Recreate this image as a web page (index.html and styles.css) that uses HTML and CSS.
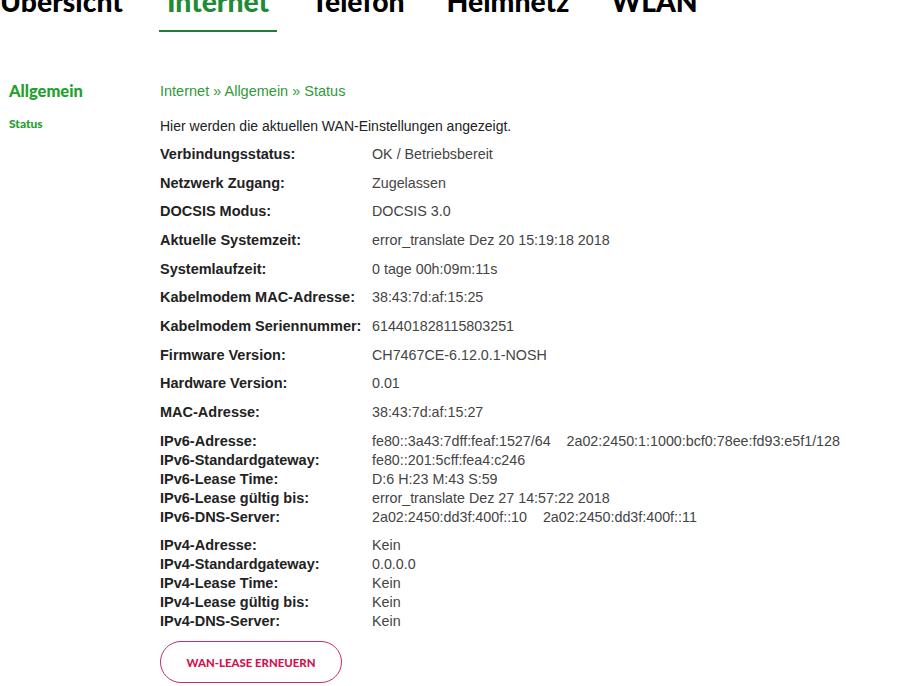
FILE: index.html
```html
<!DOCTYPE html>
<html lang="de">
<head>
<meta charset="utf-8">
<title>Internet Status</title>
<link rel="stylesheet" href="styles.css">
</head>
<body>
<nav class="topnav">
  <a class="nav-item">Übersicht</a>
  <a class="nav-item active">Internet</a>
  <a class="nav-item">Telefon</a>
  <a class="nav-item">Heimnetz</a>
  <a class="nav-item">WLAN</a>
</nav>
<div class="page">
  <aside class="sidebar">
    <div class="side-title">Allgemein</div>
    <div class="side-link">Status</div>
  </aside>
  <main class="content">
    <div class="breadcrumb">Internet » Allgemein » Status</div>
    <p class="intro">Hier werden die aktuellen WAN-Einstellungen angezeigt.</p>
    <div class="info">
      <div class="group"><div class="row"><span class="lbl">Verbindungsstatus:</span><span class="val">OK / Betriebsbereit</span></div></div>
      <div class="group"><div class="row"><span class="lbl">Netzwerk Zugang:</span><span class="val">Zugelassen</span></div></div>
      <div class="group"><div class="row"><span class="lbl">DOCSIS Modus:</span><span class="val">DOCSIS 3.0</span></div></div>
      <div class="group"><div class="row"><span class="lbl">Aktuelle Systemzeit:</span><span class="val">error_translate Dez 20 15:19:18 2018</span></div></div>
      <div class="group"><div class="row"><span class="lbl">Systemlaufzeit:</span><span class="val">0 tage 00h:09m:11s</span></div></div>
      <div class="group"><div class="row"><span class="lbl">Kabelmodem MAC-Adresse:</span><span class="val">38:43:7d:af:15:25</span></div></div>
      <div class="group"><div class="row"><span class="lbl">Kabelmodem Seriennummer:</span><span class="val">614401828115803251</span></div></div>
      <div class="group"><div class="row"><span class="lbl">Firmware Version:</span><span class="val">CH7467CE-6.12.0.1-NOSH</span></div></div>
      <div class="group"><div class="row"><span class="lbl">Hardware Version:</span><span class="val">0.01</span></div></div>
      <div class="group"><div class="row"><span class="lbl">MAC-Adresse:</span><span class="val">38:43:7d:af:15:27</span></div></div>
      <div class="group">
        <div class="row"><span class="lbl">IPv6-Adresse:</span><span class="val">fe80::3a43:7dff:feaf:1527/64&nbsp;&nbsp;&nbsp; 2a02:2450:1:1000:bcf0:78ee:fd93:e5f1/128</span></div>
        <div class="row"><span class="lbl">IPv6-Standardgateway:</span><span class="val">fe80::201:5cff:fea4:c246</span></div>
        <div class="row"><span class="lbl">IPv6-Lease Time:</span><span class="val">D:6 H:23 M:43 S:59</span></div>
        <div class="row"><span class="lbl">IPv6-Lease gültig bis:</span><span class="val">error_translate Dez 27 14:57:22 2018</span></div>
        <div class="row"><span class="lbl">IPv6-DNS-Server:</span><span class="val">2a02:2450:dd3f:400f::10&nbsp;&nbsp;&nbsp; 2a02:2450:dd3f:400f::11</span></div>
      </div>
      <div class="group">
        <div class="row"><span class="lbl">IPv4-Adresse:</span><span class="val">Kein</span></div>
        <div class="row"><span class="lbl">IPv4-Standardgateway:</span><span class="val">0.0.0.0</span></div>
        <div class="row"><span class="lbl">IPv4-Lease Time:</span><span class="val">Kein</span></div>
        <div class="row"><span class="lbl">IPv4-Lease gültig bis:</span><span class="val">Kein</span></div>
        <div class="row"><span class="lbl">IPv4-DNS-Server:</span><span class="val">Kein</span></div>
      </div>
    </div>
    <button class="btn">WAN-LEASE ERNEUERN</button>
  </main>
</div>
</body>
</html>
```

FILE: styles.css
```css
html, body {
  margin: 0;
  padding: 0;
  background: #ffffff;
  overflow: hidden;
}
body {
  font-family: "Liberation Sans", Arial, sans-serif;
  font-size: 14.3px;
  color: #333;
}
.topnav {
  display: flex;
  gap: 26px;
  margin: -21px 0 0 -8px;
  height: 53px;
}
.nav-item {
  font-family: "Lato", "Inter", sans-serif;
  font-weight: 900;
  font-size: 28.3px;
  line-height: 44px;
  height: 44px;
  padding: 0 8px 7px;
  color: #000;
  border-bottom: 2px solid transparent;
}
.nav-item:first-child {
  margin-right: 2px;
}
.nav-item.active {
  color: #1f8b36;
  border-bottom-color: #1f7d35;
}
.page {
  display: grid;
  grid-template-columns: 160px 1fr;
  padding-top: 48px;
}
.sidebar {
  padding-left: 9px;
}
.side-title {
  font-family: "Lato", sans-serif;
  font-weight: 900;
  font-size: 16.5px;
  color: #22a02a;
  line-height: 20px;
  margin-top: 1px;
}
.side-link {
  font-family: "Lato", sans-serif;
  font-weight: 900;
  font-size: 12px;
  color: #22a02a;
  line-height: 14px;
  margin-top: 16px;
}
.breadcrumb {
  color: #2f9a3a;
  font-size: 14.5px;
  line-height: 20px;
  margin-top: 1px;
}
.intro {
  margin: 15px 0 0;
  font-size: 14px;
  line-height: 20px;
  color: #222;
}
.info {
  margin-top: 4px;
}
.group {
  padding: 4.85px 0;
}
.row {
  display: flex;
  line-height: 19px;
}
.lbl {
  width: 212px;
  flex: none;
  font-weight: bold;
  font-size: 14.5px;
  color: #222;
}
.val {
  color: #444;
}
.btn {
  margin-top: 5px;
  width: 182px;
  height: 42px;
  border: 1px solid #c2305f;
  border-radius: 21px;
  background: #fff;
  color: #d4124f;
  font-family: "Lato", sans-serif;
  font-weight: 900;
  font-size: 11.4px;
  padding: 0;
}
```
